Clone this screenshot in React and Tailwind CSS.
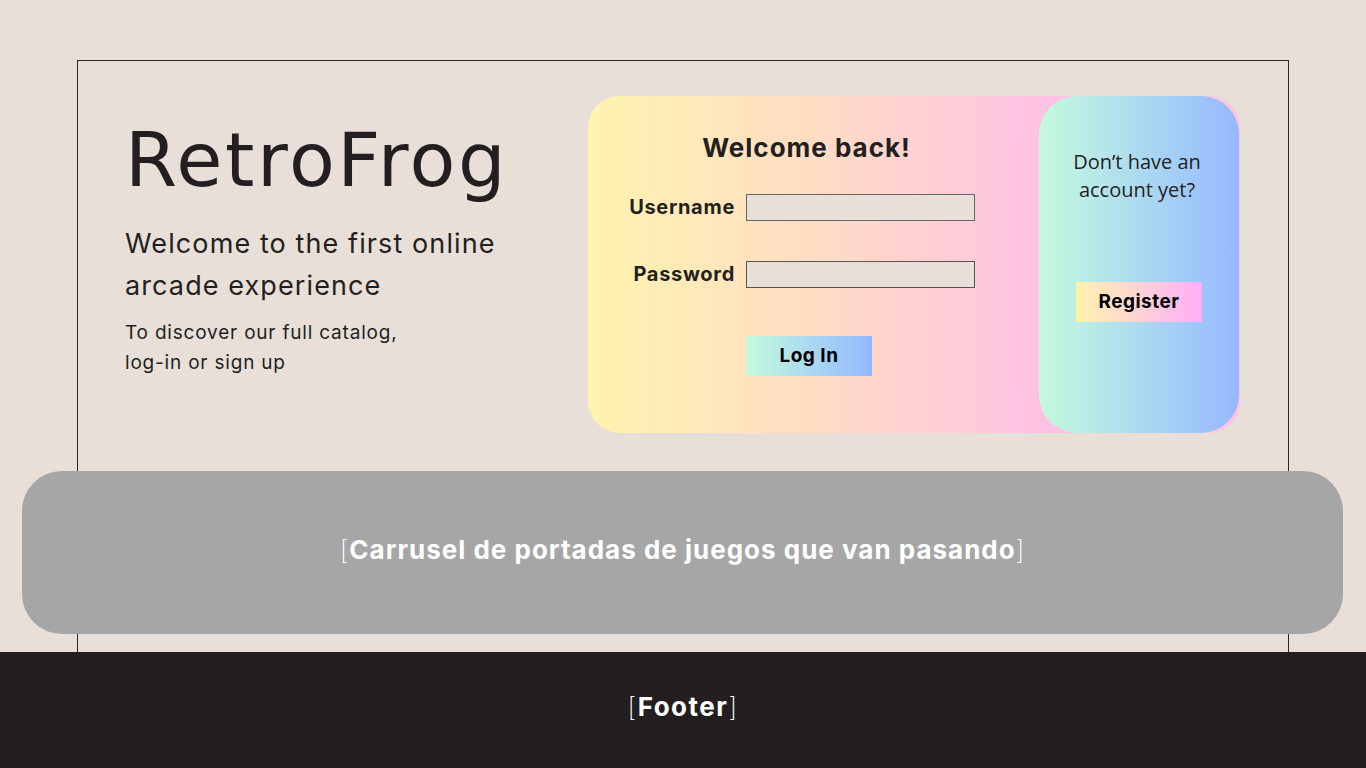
export default function App() {
  return (
    <div className="min-h-screen bg-[#e8dfd9] flex flex-col" style={{ fontFamily: "Inter, 'Liberation Sans', sans-serif" }}>
      <div className="mx-[77px] mt-[60px] flex-1 border-x border-t border-[#2b2626] flex flex-col">
        <div className="flex pt-[35px] pl-[47px]">
          <div className="w-[463px] pt-[24px] text-[#231f20]">
            <h1 className="text-[75px] leading-[80px] font-normal tracking-[2.6px]" style={{ fontFamily: "'DejaVu Sans', sans-serif" }}>RetroFrog</h1>
            <p className="mt-[23px] text-[27px] leading-[42px] font-normal tracking-[1.1px]">
              Welcome to the first online
              <br />
              arcade experience
            </p>
            <p className="mt-[11px] text-[19px] leading-[30px] tracking-[0.8px]">
              To discover our full catalog,
              <br />
              log-in or sign up
            </p>
          </div>
          <div className="w-[652px] h-[337px] rounded-[32px] bg-gradient-to-r from-[#fff4ae] via-[#ffdcc4] via-[35%] to-[#ffc2e2] to-[69%] flex">
            <div className="w-[451px] flex flex-col items-center pt-[32px]">
              <h2 className="text-[26px] leading-[40px] font-bold text-[#231f20] ml-[-14px] tracking-[1px]">Welcome back!</h2>
              <div className="mt-[24px] flex flex-col gap-[37px] ml-[-23px]">
                <div className="flex items-center gap-[11px]">
                  <label className="w-[106px] text-right text-[20px] leading-[30px] font-bold text-[#231f20] tracking-[0.7px]">Username</label>
                  <div className="w-[229px] h-[27px] bg-[#e8dfd9] border border-[#666]"></div>
                </div>
                <div className="flex items-center gap-[11px]">
                  <label className="w-[106px] text-right text-[20px] leading-[30px] font-bold text-[#231f20] tracking-[0.7px]">Password</label>
                  <div className="w-[229px] h-[27px] bg-[#e8dfd9] border border-[#555]"></div>
                </div>
              </div>
              <button className="mt-[47px] ml-[-9px] w-[126px] h-[40px] bg-gradient-to-r from-[#c4fadc] to-[#95b7ff] text-[19px] font-bold text-black tracking-[0.5px]">
                Log In
              </button>
            </div>
            <div className="w-[200px] h-full rounded-[38px] bg-gradient-to-r from-[#c6fadc] to-[#96b8ff] flex flex-col items-center pt-[52px]">
              <p className="text-center text-[20px] leading-[28px] text-[#231f20] mr-[4px]" style={{ fontFamily: "'Open Sans', sans-serif" }}>
                Don’t have an
                <br />
                account yet?
              </p>
              <button className="mt-[78px] w-[126px] h-[40px] bg-gradient-to-r from-[#fff3ab] to-[#ffadf6] text-[19px] font-bold text-black tracking-[0.5px]">
                Register
              </button>
            </div>
          </div>
        </div>
        <div className="mt-[38px] ml-[-56px] mr-[-55px] h-[163px] rounded-[40px] bg-[#a6a6a6] flex items-center justify-center pb-[6px]">
          <p className="text-[26px] font-bold text-white tracking-[1px]">
            <span className="font-extralight">[</span>Carrusel de portadas de juegos que van pasando<span className="font-extralight">]</span>
          </p>
        </div>
        <div className="h-[18px]"></div>
      </div>
      <footer className="h-[116px] bg-[#231f20] flex items-center justify-center pb-[8px]">
        <p className="text-[26px] font-bold text-white tracking-[1.5px]">
          <span className="font-extralight">[</span>Footer<span className="font-extralight">]</span>
        </p>
      </footer>
    </div>
  );
}
